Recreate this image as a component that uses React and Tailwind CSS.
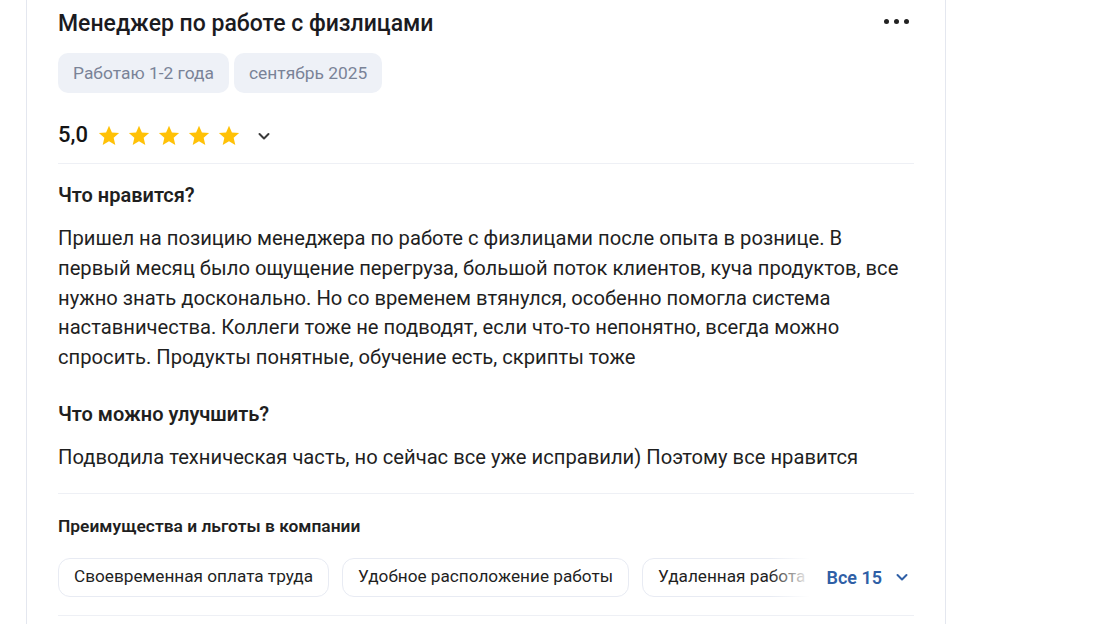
import React from "react";

function Star() {
  return (
    <svg width="22" height="21" viewBox="0 0 24 23" className="shrink-0">
      <path d="M12 0.8l3.2 7.3 7.9 0.7-6 5.3 1.8 7.8L12 17.8l-6.9 4.1 1.8-7.8-6-5.3 7.9-0.7z" fill="#ffc107" />
    </svg>
  );
}

function Chevron({ color = "#444", size = 16 }) {
  return (
    <svg width={size} height={size} viewBox="0 0 16 16" fill="none">
      <path d="M3.5 6l4.5 4.5L12.5 6" stroke={color} strokeWidth="2" strokeLinecap="round" strokeLinejoin="round" />
    </svg>
  );
}

export default function App() {
  const font = { fontFamily: "Roboto, 'Noto Sans', sans-serif" };
  return (
    <div className="w-[1111px] h-[624px] bg-white overflow-hidden text-[#1f1f1f]" style={font}>
      <div className="ml-[26px] w-[920px] h-full border-l border-r border-[#e4e7ef] px-[31px] pt-[10px]">
        <div className="flex items-center justify-between h-[28px]">
          <h1 className="text-[23px] leading-[28px] font-medium text-[#1b1b1f]">Менеджер по работе с физлицами</h1>
          <div className="flex items-center gap-[5px] mr-[5px] -mt-[6px]">
            <span className="w-[5px] h-[5px] rounded-full bg-[#222]" />
            <span className="w-[5px] h-[5px] rounded-full bg-[#222]" />
            <span className="w-[5px] h-[5px] rounded-full bg-[#222]" />
          </div>
        </div>
        <div className="flex gap-[5px] mt-[15px]">
          <span className="h-[40px] px-[15px] flex items-center rounded-[10px] bg-[#eef1f7] text-[17.4px] text-[#7a8397]">Работаю 1-2 года</span>
          <span className="h-[40px] px-[15px] flex items-center rounded-[10px] bg-[#eef1f7] text-[17.4px] text-[#7a8397]">сентябрь 2025</span>
        </div>
        <div className="flex items-center h-[34px] mt-[25px]">
          <span className="text-[22px] font-medium leading-none text-[#141414]">5,0</span>
          <div className="flex items-center gap-[8px] ml-[10px]">
            <Star /><Star /><Star /><Star /><Star />
          </div>
          <span className="ml-[16px] mt-[2px]"><Chevron color="#3a3a3a" size={16} /></span>
        </div>
        <div className="h-px bg-[#eef0f5] mt-[11px]" />
        <h2 className="mt-[19px] text-[20px] leading-[24px] font-semibold">Что нравится?</h2>
        <p className="mt-[17px] text-[20.2px] leading-[29.75px] max-w-[845px]">
          Пришел на позицию менеджера по работе с физлицами после опыта в рознице. В первый месяц было ощущение перегруза, большой поток клиентов, куча продуктов, все нужно знать досконально. Но со временем втянулся, особенно помогла система наставничества. Коллеги тоже не подводят, если что-то непонятно, всегда можно спросить. Продукты понятные, обучение есть, скрипты тоже
        </p>
        <h2 className="mt-[29px] text-[20px] leading-[24px] font-semibold">Что можно улучшить?</h2>
        <p className="mt-[17px] text-[20.2px] leading-[29.75px]">
          Подводила техническая часть, но сейчас все уже исправили) Поэтому все нравится
        </p>
        <div className="h-px bg-[#eef0f5] mt-[20px]" />
        <h3 className="mt-[22px] text-[17.4px] leading-[20px] font-semibold">Преимущества и льготы в компании</h3>
        <div className="flex items-center mt-[22px]">
          <div className="relative flex-1 overflow-hidden">
            <div className="flex gap-[13px] whitespace-nowrap">
              <span className="h-[39px] px-[15px] flex items-center rounded-[12px] border border-[#e8ebf3] text-[17.2px]">Своевременная оплата труда</span>
              <span className="h-[39px] px-[15px] flex items-center rounded-[12px] border border-[#e8ebf3] text-[17.2px]">Удобное расположение работы</span>
              <span className="h-[39px] px-[15px] flex items-center rounded-[12px] border border-[#e8ebf3] text-[17.2px]">Удаленная работа</span>
            </div>
            <div className="absolute right-0 top-0 h-full w-[40px] bg-gradient-to-r from-transparent to-white" />
          </div>
          <button className="flex items-center gap-[12px] ml-[16px] pr-[4px] text-[18px] font-semibold text-[#2f5fa6]">
            Все 15
            <Chevron color="#2f5fa6" size={16} />
          </button>
        </div>
        <div className="h-px bg-[#eef0f5] mt-[18px]" />
      </div>
    </div>
  );
}
